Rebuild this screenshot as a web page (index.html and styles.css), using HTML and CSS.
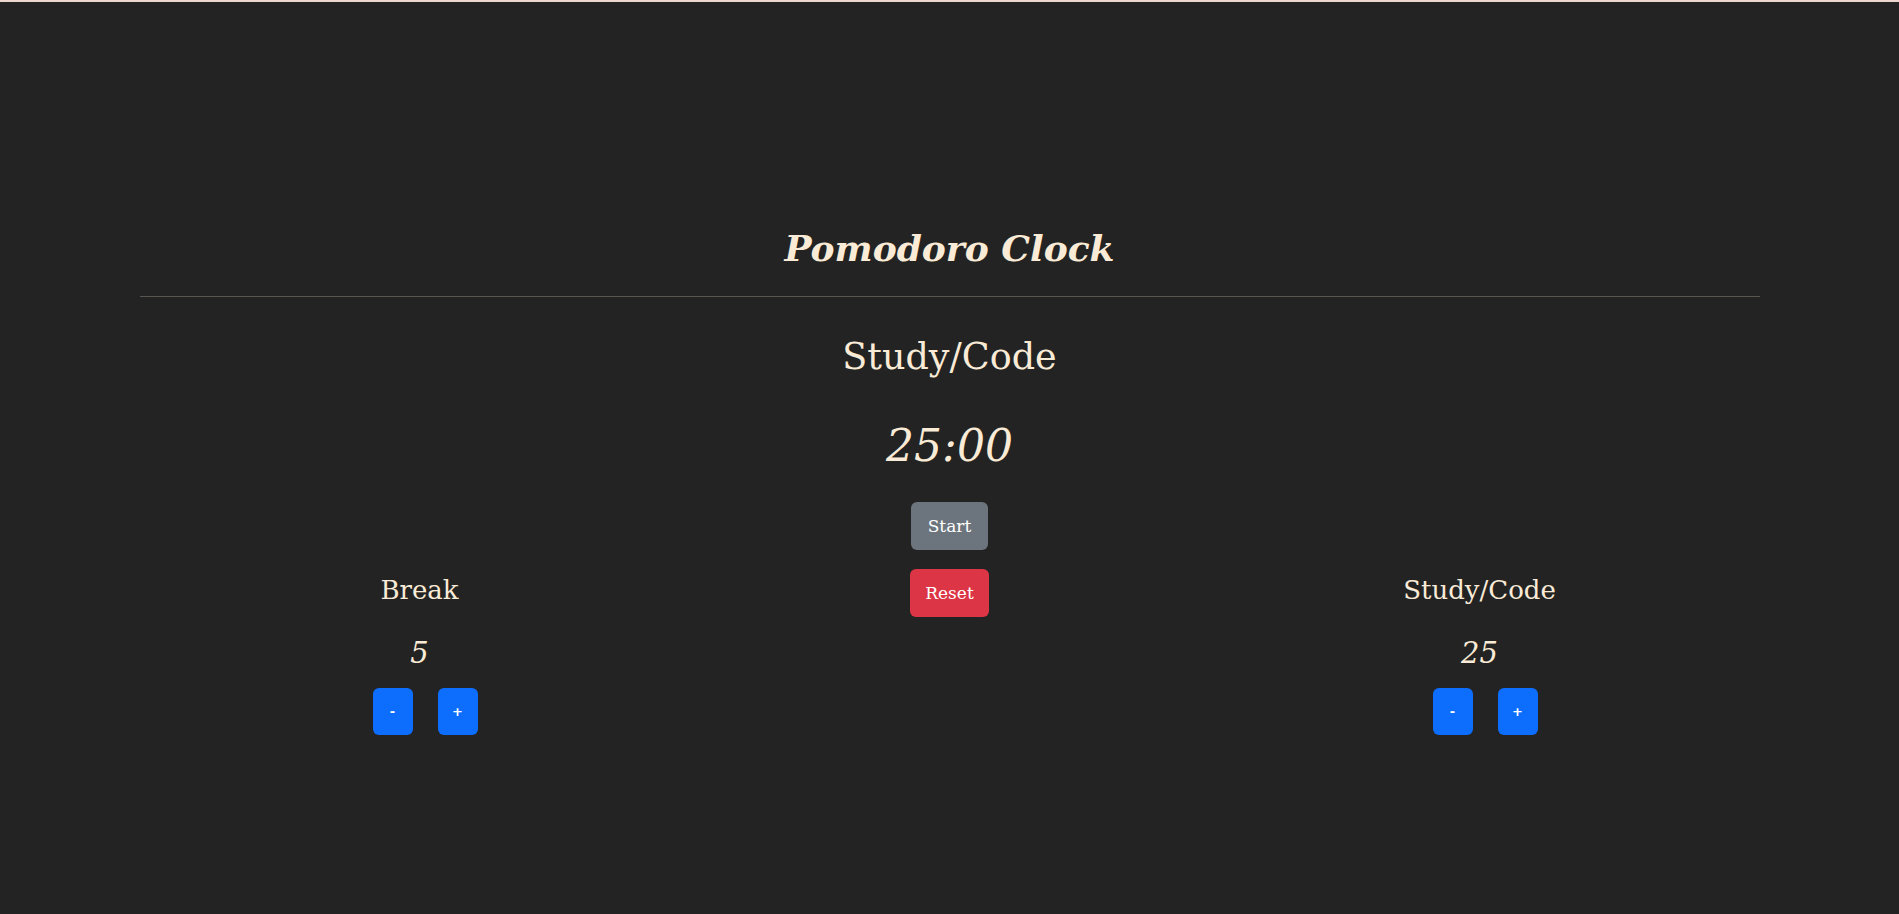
FILE: index.html
```html
<!DOCTYPE html>
<html lang="en">
<head>
<meta charset="utf-8">
<title>Pomodoro Clock</title>
<link rel="stylesheet" href="styles.css">
</head>
<body>
<main class="container">
  <header class="header">
    <h1 class="title">Pomodoro Clock</h1>
  </header>
  <hr class="divider">
  <section class="timer">
    <h2 class="mode">Study/Code</h2>
    <div class="time">25:00</div>
    <button class="btn btn-secondary btn-main">Start</button>
  </section>
  <div class="row">
    <div class="col setting">
      <h3 class="setting-label">Break</h3>
      <div class="setting-value">5</div>
      <div class="controls">
        <button class="btn btn-primary btn-step">-</button>
        <button class="btn btn-primary btn-step">+</button>
      </div>
    </div>
    <div class="col col-center">
      <button class="btn btn-danger btn-main">Reset</button>
    </div>
    <div class="col setting">
      <h3 class="setting-label">Study/Code</h3>
      <div class="setting-value">25</div>
      <div class="controls">
        <button class="btn btn-primary btn-step">-</button>
        <button class="btn btn-primary btn-step">+</button>
      </div>
    </div>
  </div>
</main>
</body>
</html>
```

FILE: styles.css
```css
* { box-sizing: border-box; }

html, body {
  margin: 0;
  padding: 0;
}

body {
  background: #232323;
  color: #faebd7;
  border-top: 2px solid #ecd6cf;
  min-height: 914px;
  font-family: "DejaVu Serif", serif;
}

.container {
  width: 1620px;
  margin: 0 auto;
  padding-top: 218px;
  text-align: center;
}

.title {
  margin: 0;
  font-size: 36px;
  line-height: 56px;
  font-weight: 700;
  font-style: italic;
}

.divider {
  margin: 20px 0 0;
  border: 0;
  border-top: 1px solid #faebd7;
  opacity: 0.25;
}

.timer {
  display: flex;
  flex-direction: column;
  align-items: center;
}

.mode {
  margin: 36px 0 0;
  font-size: 36.5px;
  line-height: 48px;
  font-weight: 400;
}

.time {
  margin-top: 35px;
  font-size: 44px;
  line-height: 60px;
  font-style: italic;
}

.btn {
  border: 0;
  border-radius: 6px;
  color: #fff;
  font-family: "DejaVu Serif", serif;
  cursor: pointer;
  padding: 0;
}

.btn-main {
  margin-top: 26px;
  width: 77px;
  height: 48px;
  font-size: 17px;
}

.btn-secondary { background: #6c757d; }
.btn-danger { background: #dc3545; width: 79px; }
.btn-primary { background: #0d6efd; }

.row {
  display: flex;
  padding: 0 15px;
  margin-top: 19px;
}

.col {
  flex: 1 1 0;
  display: flex;
  flex-direction: column;
  align-items: center;
}

.col-center .btn-main { margin-top: 0; }

.setting-label {
  margin: 3px 0 0;
  font-size: 26px;
  line-height: 36px;
  font-weight: 400;
}

.setting-value {
  margin-top: 25px;
  font-size: 29px;
  line-height: 40px;
  font-style: italic;
}

.controls {
  margin-top: 15px;
  padding-left: 11px;
  display: flex;
  gap: 25px;
}

.btn-step {
  width: 40px;
  height: 47px;
  font-family: "DejaVu Sans", sans-serif;
  font-size: 13px;
  font-weight: 700;
}
```
